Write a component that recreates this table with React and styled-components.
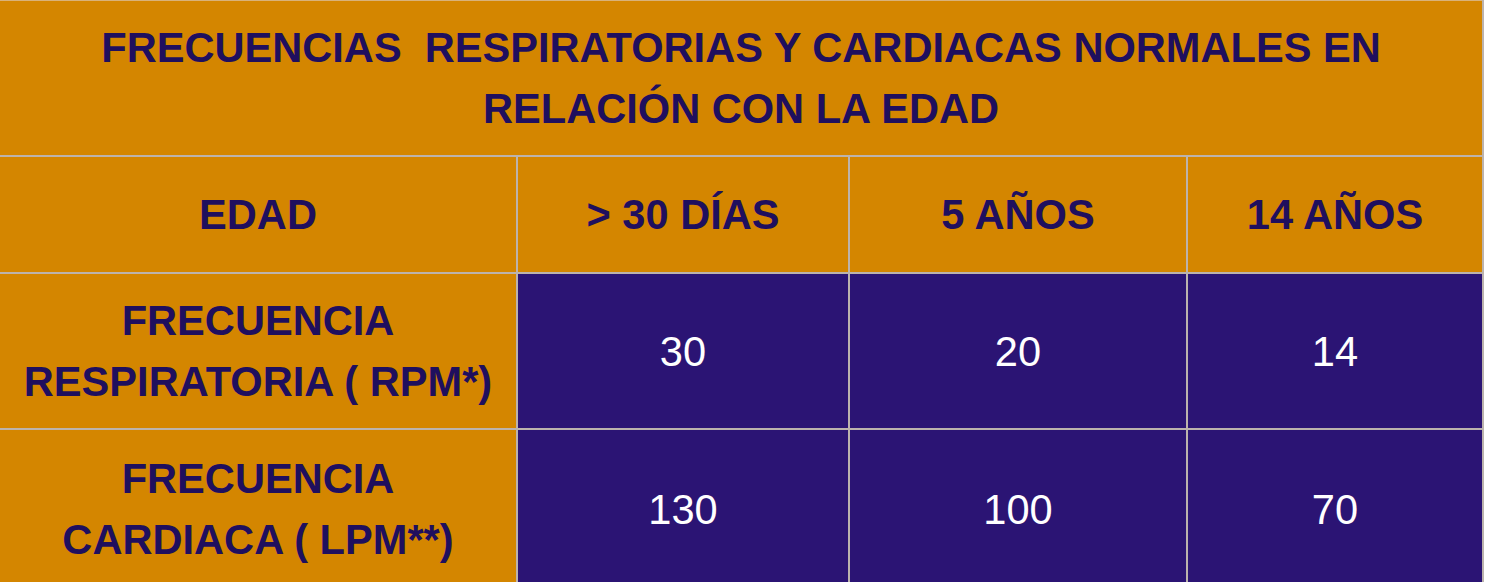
import React from "react";
import styled, { createGlobalStyle } from "styled-components";

const orange = "#d48600";
const purple = "#2b1474";
const ink = "#1f0f5e";
const rule = "#bcb3ad";

const GlobalStyle = createGlobalStyle`
	html, body {
		margin: 0;
		padding: 0;
		background: #ffffff;
	}
	body {
		font-family: "Liberation Sans", Arial, Helvetica, sans-serif;
	}
`;

const Sheet = styled.table`
	width: 1484px;
	table-layout: fixed;
	border-collapse: collapse;
	border-top: 1px solid #d9b27a;
	border-right: 2px solid ${rule};
	font-size: 41.6px;
	line-height: 61px;
	text-align: center;
`;

const Cell = styled.td`
	padding: 0;
	vertical-align: middle;
	border-bottom: 2px solid ${rule};
	border-left: 2px solid ${rule};

	&:first-child {
		border-left: none;
	}
`;

const TitleCell = styled(Cell)`
	height: 154px;
	background: ${orange};
	color: ${ink};
	font-weight: bold;
	white-space: pre-wrap;
`;

const HeadCell = styled(Cell)`
	height: 115px;
	background: ${orange};
	color: ${ink};
	font-weight: bold;
`;

const LabelCell = styled(Cell)`
	height: ${props => props.$h}px;
	background: ${orange};
	color: ${ink};
	font-weight: bold;
`;

const ValueCell = styled(Cell)`
	background: ${purple};
	color: #ffffff;
	font-weight: normal;
`;

const ages = ["> 30 DÍAS", "5 AÑOS", "14 AÑOS"];

const rows = [
	{ label: ["FRECUENCIA", "RESPIRATORIA ( RPM*)"], values: ["30", "20", "14"], h: 154 },
	{ label: ["FRECUENCIA", "CARDIACA ( LPM**)"], values: ["130", "100", "70"], h: 158 },
];

export default function App() {
	return (
		<>
			<GlobalStyle />
			<Sheet>
				<colgroup>
					<col style={{ width: 517 }} />
					<col style={{ width: 332 }} />
					<col style={{ width: 338 }} />
					<col />
				</colgroup>
				<tbody>
					<tr>
						<TitleCell colSpan={4}>
							{"FRECUENCIAS  RESPIRATORIAS Y CARDIACAS NORMALES EN\nRELACIÓN CON LA EDAD"}
						</TitleCell>
					</tr>
					<tr>
						<HeadCell>EDAD</HeadCell>
						{ages.map(a => (
							<HeadCell key={a}>{a}</HeadCell>
						))}
					</tr>
					{rows.map(r => (
						<tr key={r.label[1]}>
							<LabelCell $h={r.h}>
								{r.label[0]}
								<br />
								{r.label[1]}
							</LabelCell>
							{r.values.map((v, i) => (
								<ValueCell key={i}>{v}</ValueCell>
							))}
						</tr>
					))}
				</tbody>
			</Sheet>
		</>
	);
}
